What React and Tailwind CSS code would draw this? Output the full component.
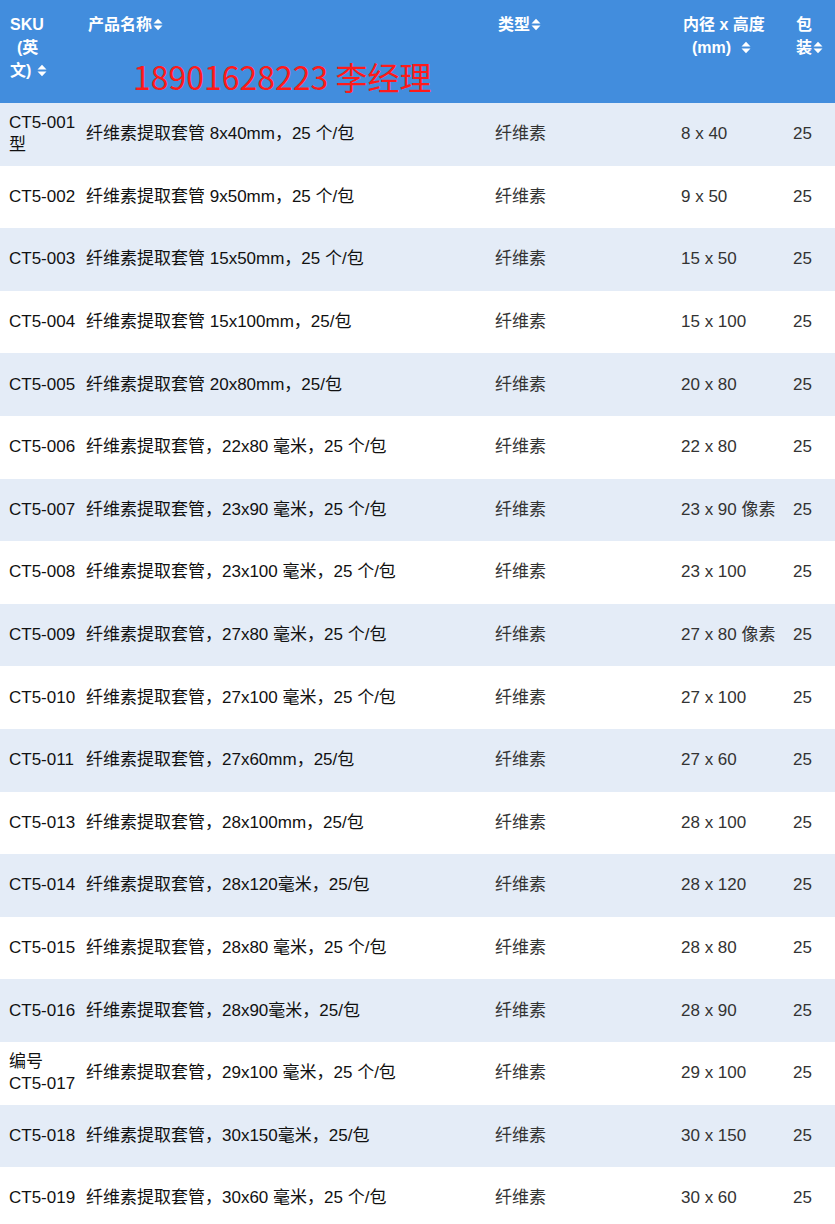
const rows = [
  ['CT5-001 型', '纤维素提取套管 8x40mm，25 个/包', '8 x 40'],
  ['CT5-002', '纤维素提取套管 9x50mm，25 个/包', '9 x 50'],
  ['CT5-003', '纤维素提取套管 15x50mm，25 个/包', '15 x 50'],
  ['CT5-004', '纤维素提取套管 15x100mm，25/包', '15 x 100'],
  ['CT5-005', '纤维素提取套管 20x80mm，25/包', '20 x 80'],
  ['CT5-006', '纤维素提取套管，22x80 毫米，25 个/包', '22 x 80'],
  ['CT5-007', '纤维素提取套管，23x90 毫米，25 个/包', '23 x 90 像素'],
  ['CT5-008', '纤维素提取套管，23x100 毫米，25 个/包', '23 x 100'],
  ['CT5-009', '纤维素提取套管，27x80 毫米，25 个/包', '27 x 80 像素'],
  ['CT5-010', '纤维素提取套管，27x100 毫米，25 个/包', '27 x 100'],
  ['CT5-011', '纤维素提取套管，27x60mm，25/包', '27 x 60'],
  ['CT5-013', '纤维素提取套管，28x100mm，25/包', '28 x 100'],
  ['CT5-014', '纤维素提取套管，28x120毫米，25/包', '28 x 120'],
  ['CT5-015', '纤维素提取套管，28x80 毫米，25 个/包', '28 x 80'],
  ['CT5-016', '纤维素提取套管，28x90毫米，25/包', '28 x 90'],
  ['编号 CT5-017', '纤维素提取套管，29x100 毫米，25 个/包', '29 x 100'],
  ['CT5-018', '纤维素提取套管，30x150毫米，25/包', '30 x 150'],
  ['CT5-019', '纤维素提取套管，30x60 毫米，25 个/包', '30 x 60'],
];

const SortIcon = () => (
  <svg width="10" height="13" viewBox="0 0 10 13" className="inline-block align-[-1px] ml-[1px]">
    <path d="M0.5 5.6 L5 0.8 L9.5 5.6 Z" fill="white" />
    <path d="M0.5 7.4 L9.5 7.4 L5 12.2 Z" fill="white" />
  </svg>
);

export default function App() {
  return (
    <div className="w-[835px] bg-white font-['Liberation_Sans','Noto_Sans_CJK_SC',sans-serif] text-[17px]">
      <div className="relative flex h-[103px] bg-[#428ddd] text-white text-[16px] font-bold leading-[23px] pt-[13px]">
        <div className="w-[78px] pl-[10px]">
          <div>SKU</div>
          <div className="pl-[7px]">(英</div>
          <div>
            文) <SortIcon />
          </div>
        </div>
        <div className="w-[409px] pl-[10px]">
          产品名称<SortIcon />
        </div>
        <div className="w-[186px] pl-[11px]">
          类型<SortIcon />
        </div>
        <div className="w-[112px] pl-[10px]">
          <div>内径 x 高度</div>
          <div className="pl-[9px]">
            (mm) &nbsp;<SortIcon />
          </div>
        </div>
        <div className="flex-1 pl-[11px]">
          <div>包</div>
          <div>
            装<SortIcon />
          </div>
        </div>
        <div className="absolute left-[133px] top-[60px] text-[32px] leading-[32px] font-normal text-[#ff1a1a] font-['Noto_Sans_CJK_SC',sans-serif] whitespace-nowrap">
          18901628223 李经理
        </div>
      </div>
      {rows.map(([sku, name, size], i) => (
        <div
          key={sku}
          className={`flex items-center h-[62.6px] leading-[22px] ${i % 2 === 0 ? 'bg-[#e4ecf7]' : 'bg-white'}`}
        >
          <div className="w-[78px] pl-[9px] pr-[1px] text-[#111]">{sku}</div>
          <div className="w-[409px] pl-[8px] text-[#111]">{name}</div>
          <div className="w-[186px] pl-[8px] text-[#333]">纤维素</div>
          <div className="w-[112px] pl-[8px] text-[#333]">{size}</div>
          <div className="flex-1 pl-[8px] text-[#333]">25</div>
        </div>
      ))}
    </div>
  );
}
